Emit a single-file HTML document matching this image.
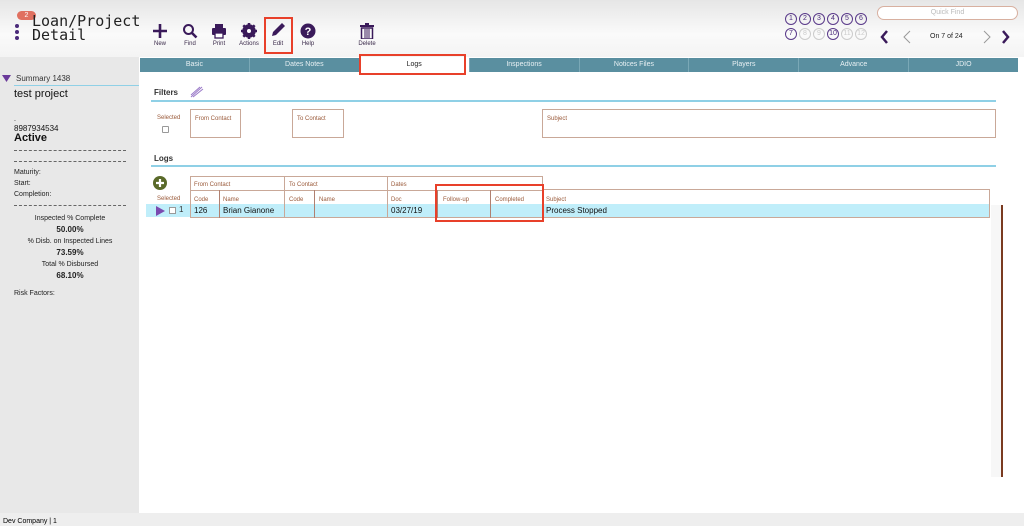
<!DOCTYPE html>
<html><head><style>
*{margin:0;padding:0;box-sizing:border-box}
body{width:1024px;height:526px;overflow:hidden;font-family:"Liberation Sans",sans-serif;background:#fff;position:relative}
.a{position:absolute}
.hdr{left:0;top:0;width:1024px;height:57px;background:linear-gradient(#e6e6e6,#fafafa 60%,#f4f4f4)}
.side{left:0;top:57px;width:139px;height:456px;background:#e8e8e8}
.foot{left:0;top:513px;width:1024px;height:13px;background:#eee;font-size:7px;padding:5px 0 0 3px}
.tb{font-size:6px;color:#3a2a4a;text-align:center;width:30px}
.tabs{left:140px;top:58px;width:878px;height:14px;background:#5a8fa0;display:flex}
.tabs div{flex:1;color:#e8f0f3;font-size:7px;text-align:center;line-height:14px;border-right:1px solid #7aa8b6}
.red{border:2px solid #e8402a}
.lbl{font-size:6px;color:#9a5a3a}
.box{border:1px solid #c9a898}
.s{font-size:7px;color:#222}
.c{text-align:center}
.circ{display:inline-block;width:12px;height:12px;border:1px solid #5a3a8a;border-radius:50%;font-size:7px;color:#4a2a7a;text-align:center;line-height:10px;margin-right:2px}
.circ.l{border-color:#ccc;color:#ccc}
</style></head><body>
<div class="a hdr"></div>
<div class="a" style="left:17px;top:11px;width:19px;height:9px;background:#e07060;border-radius:5px;color:#fff;font-size:7px;text-align:center;line-height:9px">2</div>
<div class="a" style="left:15px;top:24px;width:4px;height:4px;border-radius:50%;background:#4a2a7a;box-shadow:0 6px 0 #4a2a7a,0 12px 0 #4a2a7a"></div>
<div class="a" style="left:32px;top:14px;font-family:'DejaVu Sans Mono','Liberation Mono',monospace;font-size:15px;line-height:14px;color:#222">Loan/Project<br>Detail</div>
<svg class="a" style="left:152px;top:23px" width="16" height="16"><path d="M8 1V15M1 8H15" stroke="#3a1a5a" stroke-width="2.6"/></svg>
<div class="a tb" style="left:145px;top:41px">New</div>
<svg class="a" style="left:182px;top:23px" width="16" height="16"><circle cx="6.5" cy="6.5" r="4.5" fill="none" stroke="#3a1a5a" stroke-width="2"/><path d="M10 10L14.5 14.5" stroke="#3a1a5a" stroke-width="2.6"/></svg>
<div class="a tb" style="left:175px;top:41px">Find</div>
<svg class="a" style="left:211px;top:23px" width="16" height="16"><rect x="4" y="1" width="8" height="4" fill="#3a1a5a"/><rect x="1" y="5" width="14" height="7" rx="1" fill="#3a1a5a"/><rect x="4" y="10" width="8" height="5" fill="#fff" stroke="#3a1a5a" stroke-width="1.3"/></svg>
<div class="a tb" style="left:204px;top:41px">Print</div>
<svg class="a" style="left:241px;top:23px" width="16" height="16"><circle cx="8" cy="8" r="5" fill="none" stroke="#3a1a5a" stroke-width="3.5"/><path d="M8 0V16M0 8H16M2.3 2.3L13.7 13.7M13.7 2.3L2.3 13.7" stroke="#3a1a5a" stroke-width="2.5"/><circle cx="8" cy="8" r="2" fill="#fff"/></svg>
<div class="a tb" style="left:234px;top:41px">Actions</div>
<div class="a red" style="left:264px;top:17px;width:29px;height:37px"></div>
<svg class="a" style="left:270px;top:22px" width="16" height="16"><path d="M2 14L3 10L12 1L15 4L6 13Z" fill="#3a1a5a"/></svg>
<div class="a tb" style="left:263px;top:41px">Edit</div>
<svg class="a" style="left:300px;top:23px" width="16" height="16"><circle cx="8" cy="8" r="7.5" fill="#3a1a5a"/><text x="8" y="12" font-size="11" font-weight="bold" fill="#fff" text-anchor="middle" font-family="Liberation Sans">?</text></svg>
<div class="a tb" style="left:293px;top:41px">Help</div>
<svg class="a" style="left:360px;top:23px" width="14" height="16"><rect x="0" y="2" width="14" height="2" fill="#3a1a5a"/><rect x="5" y="0" width="4" height="2" fill="#3a1a5a"/><rect x="1.5" y="5" width="11" height="11" fill="none" stroke="#3a1a5a" stroke-width="1.5"/><path d="M5 6V15M7 6V15M9 6V15" stroke="#3a1a5a"/></svg>
<div class="a tb" style="left:352px;top:41px">Delete</div>

<div class="a" style="left:785px;top:7px;white-space:nowrap"><span class="circ">1</span><span class="circ">2</span><span class="circ">3</span><span class="circ">4</span><span class="circ">5</span><span class="circ">6</span></div>
<div class="a" style="left:785px;top:22px;white-space:nowrap"><span class="circ">7</span><span class="circ l">8</span><span class="circ l">9</span><span class="circ">10</span><span class="circ l">11</span><span class="circ l">12</span></div>
<div class="a" style="left:877px;top:6px;width:141px;height:14px;border:1px solid #d8b0a0;border-radius:7px;background:#fff;font-size:7px;color:#bbb;text-align:center;line-height:12px">Quick Find</div>
<svg class="a" style="left:880px;top:29px" width="130" height="16"><path d="M7 2L2 8L7 14" fill="none" stroke="#3a1a5a" stroke-width="2.5"/><path d="M30 2L24 8L30 14" fill="none" stroke="#999" stroke-width="1"/><path d="M104 2L110 8L104 14" fill="none" stroke="#999" stroke-width="1"/><path d="M123 2L128 8L123 14" fill="none" stroke="#3a1a5a" stroke-width="2.5"/></svg>
<div class="a" style="left:930px;top:33px;font-size:7px;color:#222">On 7 of 24</div>

<div class="a side"></div>
<svg class="a" style="left:2px;top:75px" width="10" height="8"><path d="M0 0H9L4.5 7Z" fill="#6a3a9a"/></svg>
<div class="a" style="left:16px;top:74px;font-size:8px;color:#333">Summary 1438</div>
<div class="a" style="left:14px;top:85px;width:125px;height:1px;background:#8fd0e6"></div>
<div class="a" style="left:14px;top:88px;font-size:11px;color:#111">test project</div>
<div class="a" style="left:14px;top:116px;font-size:7px">.</div>
<div class="a" style="left:14px;top:124px;font-size:8px;color:#111">8987934534</div>
<div class="a" style="left:14px;top:132px;font-size:11px;font-weight:bold;color:#111">Active</div>
<div class="a" style="left:14px;top:150px;width:112px;border-top:1px dashed #666"></div>
<div class="a" style="left:14px;top:161px;width:112px;border-top:1px dashed #666"></div>
<div class="a s" style="left:14px;top:169px">Maturity:</div>
<div class="a s" style="left:14px;top:180px">Start:</div>
<div class="a s" style="left:14px;top:191px">Completion:</div>
<div class="a" style="left:14px;top:205px;width:112px;border-top:1px dashed #666"></div>
<div class="a s c" style="left:14px;top:213px;width:112px;line-height:11px">Inspected % Complete<br><b style="font-size:8px">50.00%</b><br>% Disb. on Inspected Lines<br><b style="font-size:8px">73.59%</b><br>Total % Disbursed<br><b style="font-size:8px">68.10%</b></div>
<div class="a s" style="left:14px;top:290px">Risk Factors:</div>

<div class="a tabs"><div>Basic</div><div>Dates Notes</div><div style="background:#fff;color:#222">Logs</div><div>Inspections</div><div>Notices Files</div><div>Players</div><div>Advance</div><div style="border:none">JDIO</div></div>
<div class="a red" style="left:359px;top:54px;width:107px;height:21px"></div>

<div class="a" style="left:154px;top:88px;font-size:8px;font-weight:bold;color:#333">Filters</div>
<svg class="a" style="left:190px;top:86px" width="14" height="12"><path d="M1 11L12 1M3 11L13 3M1 9L10 1" stroke="#9a7ac8" stroke-width="1"/></svg>
<div class="a" style="left:151px;top:100px;width:845px;height:2px;background:#8fd0e6"></div>
<div class="a lbl" style="left:157px;top:115px">Selected</div>
<div class="a" style="left:162px;top:126px;width:7px;height:7px;border:1px solid #999;border-radius:1px;background:#fff"></div>
<div class="a box" style="left:190px;top:109px;width:51px;height:29px"><span class="lbl" style="position:absolute;left:4px;top:6px">From Contact</span></div>
<div class="a box" style="left:292px;top:109px;width:52px;height:29px"><span class="lbl" style="position:absolute;left:4px;top:6px">To Contact</span></div>
<div class="a box" style="left:542px;top:109px;width:454px;height:29px"><span class="lbl" style="position:absolute;left:4px;top:6px">Subject</span></div>

<div class="a" style="left:154px;top:154px;font-size:8px;font-weight:bold;color:#333">Logs</div>
<div class="a" style="left:151px;top:165px;width:845px;height:2px;background:#8fd0e6"></div>
<svg class="a" style="left:153px;top:176px" width="14" height="14"><circle cx="7" cy="7" r="7" fill="#5a6a2a"/><path d="M7 3V11M3 7H11" stroke="#fff" stroke-width="2.2"/></svg>
<div class="a lbl" style="left:157px;top:196px">Selected</div>
<div class="a" style="left:146px;top:204px;width:843px;height:13px;background:#c0eefa"></div>
<svg class="a" style="left:156px;top:206px" width="9" height="10"><path d="M0 0L9 5L0 10Z" fill="#7a4ab0"/></svg>
<div class="a" style="left:169px;top:207px;width:7px;height:7px;border:1px solid #999;background:#fff"></div>
<div class="a" style="left:179px;top:205px;font-size:8px;color:#333">1</div>
<!-- grid -->
<div class="a box" style="left:190px;top:176px;width:95px;height:42px"></div>
<div class="a box" style="left:284px;top:176px;width:104px;height:42px"></div>
<div class="a box" style="left:387px;top:176px;width:156px;height:42px"></div>
<div class="a" style="left:190px;top:190px;width:353px;border-top:1px solid #c9a898"></div>
<div class="a" style="left:219px;top:190px;height:28px;border-left:1px solid #b08070"></div>
<div class="a" style="left:314px;top:190px;height:28px;border-left:1px solid #b08070"></div>
<div class="a" style="left:437px;top:190px;height:28px;border-left:1px solid #b08070"></div>
<div class="a" style="left:490px;top:190px;height:28px;border-left:1px solid #b08070"></div>
<div class="a box" style="left:543px;top:189px;width:447px;height:29px;border-left:none"></div>
<div class="a lbl" style="left:194px;top:182px">From Contact</div>
<div class="a lbl" style="left:289px;top:182px">To Contact</div>
<div class="a lbl" style="left:391px;top:182px">Dates</div>
<div class="a lbl" style="left:194px;top:197px">Code</div>
<div class="a lbl" style="left:223px;top:197px">Name</div>
<div class="a lbl" style="left:289px;top:197px">Code</div>
<div class="a lbl" style="left:319px;top:197px">Name</div>
<div class="a lbl" style="left:391px;top:197px">Doc</div>
<div class="a lbl" style="left:443px;top:197px">Follow-up</div>
<div class="a lbl" style="left:495px;top:197px">Completed</div>
<div class="a lbl" style="left:546px;top:197px">Subject</div>
<div class="a" style="left:194px;top:206px;font-size:8px;color:#111">126</div>
<div class="a" style="left:223px;top:206px;font-size:8px;color:#111">Brian Gianone</div>
<div class="a" style="left:391px;top:206px;font-size:8px;color:#111">03/27/19</div>
<div class="a" style="left:546px;top:206px;font-size:8px;color:#111">Process Stopped</div>
<div class="a red" style="left:435px;top:184px;width:109px;height:38px"></div>

<div class="a" style="left:991px;top:205px;width:12px;height:272px;background:#f7f7f7"></div>
<div class="a" style="left:1001px;top:205px;width:2px;height:272px;background:#7a3a20"></div>

<div class="a foot">Dev Company | 1</div>
</body></html>
